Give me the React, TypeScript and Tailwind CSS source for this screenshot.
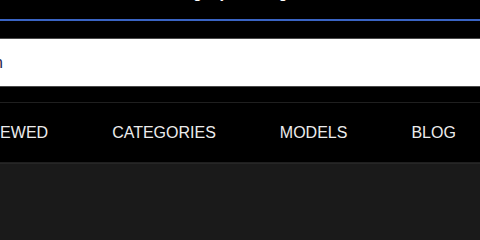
export default function App() {
  return (
    <div className="w-[480px] h-[240px] overflow-hidden bg-black" style={{ fontFamily: '"Liberation Sans", Arial, sans-serif' }}>
      <div className="relative h-[3px] overflow-hidden">
        <div className="flex -mt-[15px] text-[16px] leading-[16px] text-white">
          <span className="ml-[193px]">g</span>
          <span className="ml-[19px]">j</span>
          <span className="ml-[54px]">g</span>
        </div>
      </div>
      <div className="h-[16px]" />
      <div className="h-[2px] bg-[#3a64c4]" />
      <div className="h-[17px]" />
      <div className="h-[49px] border-y border-[#4a4a4a] bg-white flex items-center overflow-hidden">
        <span className="-ml-[6px] text-[16px] text-[#1f1b4d]">n</span>
      </div>
      <div className="h-[15px]" />
      <nav className="h-[61px] border-y border-[#1f1f1f] bg-black flex items-center overflow-hidden pt-[1px]">
        <div className="flex gap-[64px] -ml-[15px] text-[16px] text-[#ececec] whitespace-nowrap">
          <span>VIEWED</span>
          <span>CATEGORIES</span>
          <span>MODELS</span>
          <span>BLOG</span>
        </div>
      </nav>
      <div className="h-full bg-[#1a1a1a] border-t border-[#262626]" />
    </div>
  );
}
